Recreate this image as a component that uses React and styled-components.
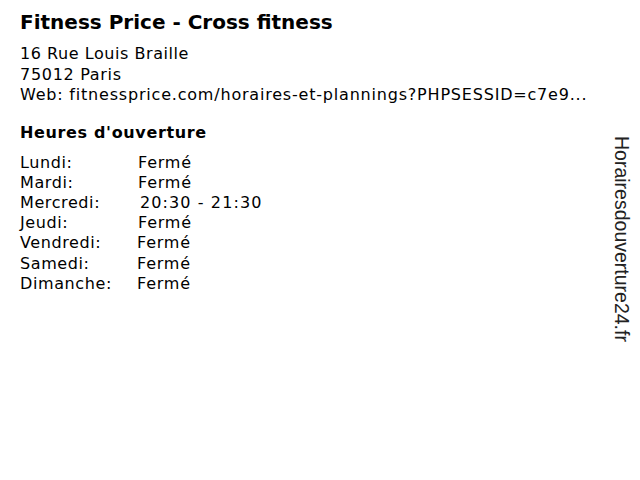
import React from "react"
import styled, { createGlobalStyle } from "styled-components"

const GlobalStyle = createGlobalStyle`
  html, body {
    margin: 0;
    padding: 0;
    background: #fff;
  }
  body {
    font-family: "DejaVu Sans", Verdana, sans-serif;
    color: #000;
  }
`

const hours = [
  { day: "Lundi:", time: "Fermé" },
  { day: "Mardi:", time: "Fermé" },
  { day: "Mercredi:", time: "20:30 - 21:30", shift: 2, wide: true },
  { day: "Jeudi:", time: "Fermé" },
  { day: "Vendredi:", time: "Fermé", shift: -1 },
  { day: "Samedi:", time: "Fermé", shift: -1 },
  { day: "Dimanche:", time: "Fermé", shift: -1 },
]

const App = () => {
  return (
    <>
      <GlobalStyle />
      <Page>
        <Main>
          <Title>Fitness Price - Cross fitness</Title>
          <Address>
            <Line $spacing={0.55}>16 Rue Louis Braille</Line>
            <Line $spacing={0.7}>75012 Paris</Line>
            <Line $spacing={0.8}>Web: fitnessprice.com/horaires-et-plannings?PHPSESSID=c7e9...</Line>
          </Address>
          <Subtitle>Heures d'ouverture</Subtitle>
          <Hours>
            {hours.map((h) => (
              <Row key={h.day}>
                <Day>{h.day}</Day>
                <Time $shift={h.shift || 0} $wide={h.wide}>
                  {h.time}
                </Time>
              </Row>
            ))}
          </Hours>
        </Main>
        <Side>Horairesdouverture24.fr</Side>
      </Page>
    </>
  )
}

export default App

const Page = styled.div`
  width: 640px;
  height: 480px;
  display: flex;
  justify-content: space-between;
  box-sizing: border-box;
  padding: 10px 8px 0 20px;
`

const Main = styled.div`
  display: flex;
  flex-direction: column;
`

const Title = styled.h1`
  margin: 0;
  font-size: 20px;
  line-height: 24px;
  font-weight: bold;
`

const Address = styled.div`
  margin-top: 10px;
  font-size: 16px;
  line-height: 20.5px;
`

const Line = styled.div`
  letter-spacing: ${(p) => p.$spacing}px;
  white-space: nowrap;
`

const Subtitle = styled.h2`
  margin: 17px 0 0;
  font-size: 16px;
  line-height: 20px;
  font-weight: bold;
  letter-spacing: 0.65px;
`

const Hours = styled.div`
  margin-top: 10px;
  font-size: 16px;
  line-height: 20.2px;
  letter-spacing: 0.6px;
`

const Row = styled.div`
  display: flex;
`

const Day = styled.span`
  width: 118px;
`

const Time = styled.span`
  margin-left: ${(p) => p.$shift}px;
  letter-spacing: ${(p) => (p.$wide ? "1.1px" : "0.8px")};
`

const Side = styled.div`
  margin-top: 126px;
  writing-mode: vertical-rl;
  font-family: "Liberation Sans", Arial, sans-serif;
  font-size: 19.5px;
  line-height: 20px;
  color: #222;
  height: fit-content;
`
